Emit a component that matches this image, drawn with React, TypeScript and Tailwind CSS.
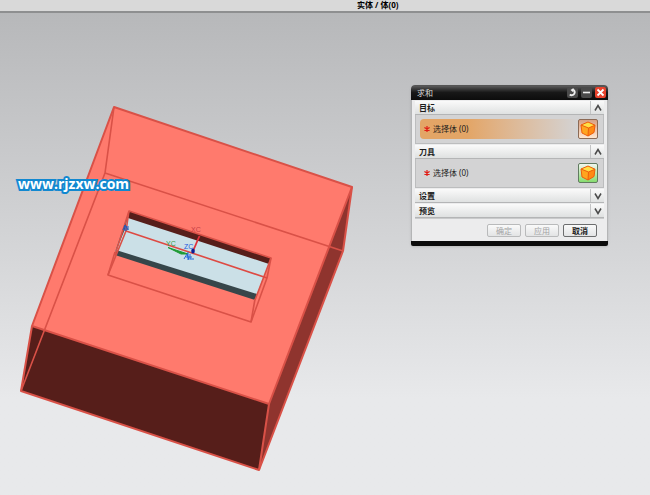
import { useState, type ReactNode } from 'react';
import clsx from 'clsx';

const edges = [
  'M114 107L352 187L269 404L32 326Z',
  'M32 326L21 391L259 470L269 404',
  'M352 187L343 251L259 470',
];

const hiddenEdges = [
  'M114 107L105 173L21 391',
  'M105 173L343 251',
  'M115 252L108 275L251 322L255 299',
  'M129 211L126 231L108 275',
  'M271 258L267 278L251 322',
];

const Model = () => (
  <svg
    className="block"
    width="360"
    height="462"
    viewBox="0 13 360 462"
    role="img"
    aria-label="实体"
  >
    {/* Faces */}
    <path d="M114 107L352 187L269 404L32 326Z" fill="#ff7a6d" />
    <path d="M32 326L269 404L259 470L21 391Z" fill="#561e1a" />
    <path d="M352 187L343 251L259 470L269 404Z" fill="#8f342e" />

    {/* Pocket */}
    <path d="M129 211L271 258L255 299L115 252Z" fill="#cbe0e7" />
    <path d="M129 211L271 258L269 264L128 218Z" fill="#561e1a" />
    <path d="M116 250L257 294L255 300L115 255Z" fill="#36464a" />
    <path d="M129 211L125 229L118 246L115 252Z" fill="#36464a" />

    <g fill="none" stroke="#d95147" strokeLinejoin="round">
      {edges.map((d) => (
        <path key={d} d={d} strokeWidth="2" />
      ))}
      {hiddenEdges.map((d) => (
        <path key={d} d={d} strokeWidth="1.6" />
      ))}
      <path d="M115 255L129 211L271 258L255 300" strokeWidth="1.6" />
      <path d="M126 231L267 278" stroke="#de4a43" strokeWidth="1.6" />
    </g>

    {/* Work coordinate system */}
    <path d="M168 247.500L188 254L181 254Z" fill="#1e9a34" stroke="#1e9a34" />
    <path d="M193 251L199.500 236" stroke="#e0303c" strokeWidth="1.800" />
    <ellipse cx="193" cy="251" rx="1.800" ry="2.500" fill="#0b1c96" />
    <path
      d="M184 259L187 254L189 260M186 257H192M190 254V259L194 259M188 252V260"
      fill="none"
      stroke="#2468d8"
    />
    <path
      d="M123 230L125 225V231M126 231V226L128 230V226"
      fill="none"
      stroke="#2456b8"
    />
    <g className="font-['Liberation_Sans',sans-serif] text-[7px]">
      <text x="191" y="232" fill="#c63f45">XC</text>
      <text x="166" y="246" fill="#359b47">YC</text>
      <text x="184" y="249" fill="#1e56dc">ZC</text>
    </g>
  </svg>
);

const CubeIcon = () => (
  <svg width="16" height="16" viewBox="0 0 16 16" aria-hidden="true">
    <path d="M8 1L15 4.200L14 11.500L8 15L2 12L1 4Z" fill="#ffa51f" />
    <path d="M1 4L8 1L15 4.200L8.500 7Z" fill="#ffdf45" />
    <path d="M8.500 7L15 4.200L14 11.500L8 15Z" fill="#ff8a13" />
    <path
      d="M8 1L15 4.200L14 11.500L8 15L2 12L1 4ZM1 4L8.500 7L15 4.200M8.500 7L8 15"
      fill="none"
      stroke="#ef5d0c"
      strokeLinejoin="round"
    />
  </svg>
);

interface SectionProps {
  title: string;
  defaultOpen?: boolean;
  children?: ReactNode;
}

const Section = ({ title, defaultOpen = false, children }: SectionProps) => {
  const [open, setOpen] = useState(defaultOpen);

  return (
    <section>
      <button
        type="button"
        aria-expanded={open}
        onClick={() => setOpen(!open)}
        className="flex h-[14px] w-full items-center justify-between border-b border-[#b4b5b6] bg-linear-to-b from-[#fafafa] to-[#dfe1e1] pl-1 font-bold"
      >
        {title}
        <span className="flex h-full w-[14px] items-center justify-center border-l border-[#c3c4c5]">
          <svg width="8" height="8" viewBox="0 0 8 8" aria-hidden="true">
            <path
              d={open ? 'M1 6.500L4 1.500L7 6.500' : 'M1 1.500L4 6.500L7 1.500'}
              fill="none"
              stroke="#4a4a4a"
              strokeWidth="1.500"
            />
          </svg>
        </span>
      </button>
      {open && children}
    </section>
  );
};

interface SelectRowProps {
  active?: boolean;
}

const SelectRow = ({ active = false }: SelectRowProps) => (
  <div className="flex h-[29px] items-center border border-t-0 border-[#bcbdbe] bg-[#d3d3d4] pr-[5px] pl-1">
    <div
      className={clsx(
        'flex h-5 flex-1 items-center gap-[3px] rounded-sm pl-1',
        active && 'bg-linear-to-r from-[#e3a566] from-30% to-[#d3d3d4]',
      )}
    >
      <svg width="6" height="6" viewBox="0 0 6 6" aria-hidden="true">
        <path
          d="M3 0V6M0.400 1.500L5.600 4.500M5.600 1.500L0.400 4.500"
          stroke="#e01b14"
          strokeWidth="1.200"
          fill="none"
        />
      </svg>
      <span>选择体 (0)</span>
    </div>
    <button
      type="button"
      aria-label="选择体"
      className={clsx(
        'flex size-5 items-center justify-center rounded-xs border',
        active
          ? 'border-[#8c6a55] bg-linear-to-b from-[#d8a184] to-[#ffe6cf]'
          : 'border-[#617b60] bg-linear-to-b from-[#f0f6ee] to-[#86dc6e]',
      )}
    >
      <CubeIcon />
    </button>
  </div>
);

const footerButton =
  'h-[13px] w-[34px] rounded-xs border bg-linear-to-b from-[#fafafa] to-[#e3e4e5]';

const UniteDialog = () => (
  <div
    role="dialog"
    aria-label="求和"
    className="absolute top-[72px] left-[411px] w-[197px] rounded-t-sm rounded-b-xs border-b-5 border-[#0b0b0b] bg-[#ececed] text-[8px] leading-[12px] text-[#1c1c1c] shadow-sm"
  >
    <div className="flex h-[15px] items-center gap-[3px] rounded-t-sm bg-linear-to-b from-[#555555] from-10% via-[#181818] via-50% to-[#0c0c0c] pr-[2px] pl-[6px] text-[#d8d8d8]">
      <h1 className="flex-1">求和</h1>
      <button
        type="button"
        aria-label="重置"
        className="flex size-[11px] items-center justify-center rounded-xs bg-[#4a4a4a]"
      >
        <svg width="9" height="9" viewBox="0 0 9 9" aria-hidden="true">
          <path
            d="M5 1.500A3 3 0 1 1 1.800 6.500"
            fill="none"
            stroke="#eeeeee"
            strokeWidth="1.800"
          />
          <path d="M2.500 2L5.500 0V4.500Z" fill="#eeeeee" />
        </svg>
      </button>
      <button
        type="button"
        aria-label="最小化"
        className="flex size-[11px] items-center justify-center rounded-xs bg-[#4a4a4a]"
      >
        <svg width="9" height="9" viewBox="0 0 9 9" aria-hidden="true">
          <path d="M1 4.500H8" stroke="#eeeeee" strokeWidth="1.600" />
        </svg>
      </button>
      <button
        type="button"
        aria-label="关闭"
        className="flex size-[11px] items-center justify-center rounded-xs bg-[#e8432d]"
      >
        <svg width="9" height="9" viewBox="0 0 9 9" aria-hidden="true">
          <path d="M1.500 1.500L7.500 7.500M7.500 1.500L1.500 7.500" stroke="#ffffff" strokeWidth="1.800" />
        </svg>
      </button>
    </div>

    <div className="border-x border-[#b4b5b6] px-[3px] pt-px">
      <div className="flex flex-col gap-px border-b border-[#c9cacb]">
        <Section title="目标" defaultOpen>
          <SelectRow active />
        </Section>
        <Section title="刀具" defaultOpen>
          <SelectRow />
        </Section>
        <Section title="设置" />
        <Section title="预览" />
      </div>

      <div className="flex justify-end gap-1 pt-[5px] pr-[7px] pb-1">
        <button
          type="button"
          disabled
          className={clsx(footerButton, 'border-[#b9babb] text-[#a3a4a5]')}
        >
          确定
        </button>
        <button
          type="button"
          disabled
          className={clsx(footerButton, 'border-[#b9babb] text-[#a3a4a5]')}
        >
          应用
        </button>
        <button type="button" className={clsx(footerButton, 'border-[#6c6d6e] font-bold')}>
          取消
        </button>
      </div>
    </div>
  </div>
);

const App = () => {
  return (
    <div className="flex min-h-screen flex-col font-['Noto_Sans','Noto_Sans_CJK_SC',sans-serif]">
      <header className="flex h-[13px] items-start border-b-2 border-[#8e8f90] bg-[#d9d9d9] pl-[357px] text-[8px] leading-[10px] font-bold text-black">
        实体 / 体(0)
      </header>

      <main className="relative flex-1 overflow-hidden bg-linear-to-b from-[#b7b8ba] via-[#d5d6d8] via-50% to-[#e8e9eb] to-80%">
        <Model />
        <a
          href="http://www.rjzxw.com"
          className="absolute top-[161px] left-[18px] font-['Open_Sans',sans-serif] text-[14px] leading-[20px] font-bold text-white [-webkit-text-stroke:4px_#1288d0] [paint-order:stroke_fill]"
        >
          www.rjzxw.com
        </a>
        <UniteDialog />
      </main>
    </div>
  );
};

export default App;
